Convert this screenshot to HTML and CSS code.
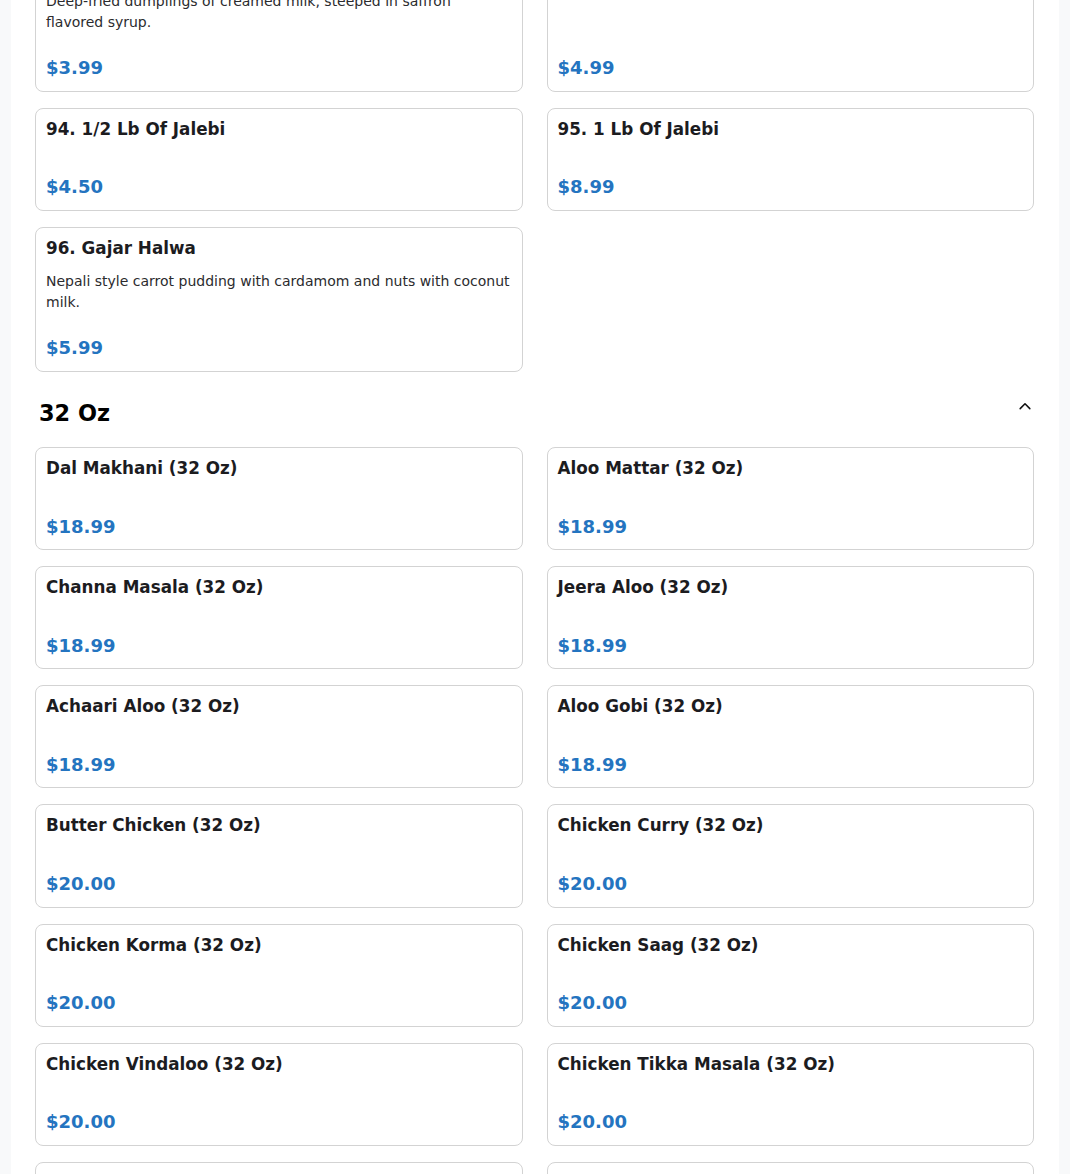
FILE: index.html
```html
<!DOCTYPE html>
<html lang="en">
<head>
<meta charset="utf-8">
<title>Menu</title>
<link rel="stylesheet" href="styles.css">
</head>
<body>
<main class="page">
  <section class="category">
    <div class="grid">
      <div class="card">
        <div class="title">92. Gulab Jamun (2 Pcs)</div>
        <div class="desc">Deep-fried dumplings of creamed milk, steeped in saffron flavored syrup.</div>
        <div class="price">$3.99</div>
      </div>
      <div class="card">
        <div class="title">93. Ras Malai (2 Pcs)</div>
        <div class="desc"></div>
        <div class="price">$4.99</div>
      </div>
      <div class="card">
        <div class="title">94. 1/2 Lb Of Jalebi</div>
        <div class="desc"></div>
        <div class="price">$4.50</div>
      </div>
      <div class="card">
        <div class="title">95. 1 Lb Of Jalebi</div>
        <div class="desc"></div>
        <div class="price">$8.99</div>
      </div>
      <div class="card">
        <div class="title">96. Gajar Halwa</div>
        <div class="desc">Nepali style carrot pudding with cardamom and nuts with coconut milk.</div>
        <div class="price">$5.99</div>
      </div>
    </div>
  </section>

  <section class="category">
    <div class="cat-head">
      <h2 class="cat-title">32 Oz</h2>
      <svg class="chev" width="14" height="14" viewBox="0 0 16 16" aria-hidden="true">
        <path d="M2.5 11 L8 5.5 L13.5 11" fill="none" stroke="#111" stroke-width="1.8" stroke-linecap="round" stroke-linejoin="round"/>
      </svg>
    </div>
    <div class="grid">
      <div class="card"><div class="title">Dal Makhani (32 Oz)</div><div class="desc"></div><div class="price">$18.99</div></div>
      <div class="card"><div class="title">Aloo Mattar (32 Oz)</div><div class="desc"></div><div class="price">$18.99</div></div>
      <div class="card"><div class="title">Channa Masala (32 Oz)</div><div class="desc"></div><div class="price">$18.99</div></div>
      <div class="card"><div class="title">Jeera Aloo (32 Oz)</div><div class="desc"></div><div class="price">$18.99</div></div>
      <div class="card"><div class="title">Achaari Aloo (32 Oz)</div><div class="desc"></div><div class="price">$18.99</div></div>
      <div class="card"><div class="title">Aloo Gobi (32 Oz)</div><div class="desc"></div><div class="price">$18.99</div></div>
      <div class="card"><div class="title">Butter Chicken (32 Oz)</div><div class="desc"></div><div class="price">$20.00</div></div>
      <div class="card"><div class="title">Chicken Curry (32 Oz)</div><div class="desc"></div><div class="price">$20.00</div></div>
      <div class="card"><div class="title">Chicken Korma (32 Oz)</div><div class="desc"></div><div class="price">$20.00</div></div>
      <div class="card"><div class="title">Chicken Saag (32 Oz)</div><div class="desc"></div><div class="price">$20.00</div></div>
      <div class="card"><div class="title">Chicken Vindaloo (32 Oz)</div><div class="desc"></div><div class="price">$20.00</div></div>
      <div class="card"><div class="title">Chicken Tikka Masala (32 Oz)</div><div class="desc"></div><div class="price">$20.00</div></div>
      <div class="card"><div class="title">Goat Curry (32 Oz)</div><div class="desc"></div><div class="price">$24.00</div></div>
      <div class="card"><div class="title">Lamb Curry (32 Oz)</div><div class="desc"></div><div class="price">$24.00</div></div>
    </div>
  </section>
</main>
</body>
</html>
```

FILE: styles.css
```css
html, body {
  margin: 0;
  padding: 0;
}
body {
  background: #f8f9fa;
  font-family: "DejaVu Sans", "Liberation Sans", sans-serif;
  color: #212529;
  overflow: hidden;
}
.page {
  width: 1048px;
  margin: -53.5px auto 0;
  background: #ffffff;
  padding: 0 25px 40px 24px;
  box-sizing: border-box;
}
.category {
  margin-bottom: 28.5px;
}
.grid {
  display: grid;
  grid-template-columns: 1fr 1fr;
  column-gap: 24px;
  row-gap: 16px;
}
.card {
  display: flex;
  flex-direction: column;
  border: 1px solid #d3d3d3;
  border-radius: 8px;
  padding: 10px 10px 12px;
  background: #fff;
}
.title {
  font-size: 16.8px;
  font-weight: bold;
  line-height: 20.5px;
  color: #1c1c1f;
  margin-bottom: 13px;
}
.desc {
  flex: 1 0 auto;
  font-size: 14px;
  line-height: 21px;
  color: #2b2b2e;
  margin-bottom: 24px;
}
.price {
  font-size: 18px;
  font-weight: bold;
  line-height: 1.2;
  color: #2474c0;
}
.cat-head {
  display: flex;
  justify-content: space-between;
  align-items: flex-start;
  padding: 0 2px 0 4px;
  margin-bottom: 20px;
}
.cat-title {
  margin: 0;
  font-size: 22.4px;
  line-height: 1.2;
  font-weight: bold;
  color: #000;
}
.chev {
  margin-top: -1px;
}
```
